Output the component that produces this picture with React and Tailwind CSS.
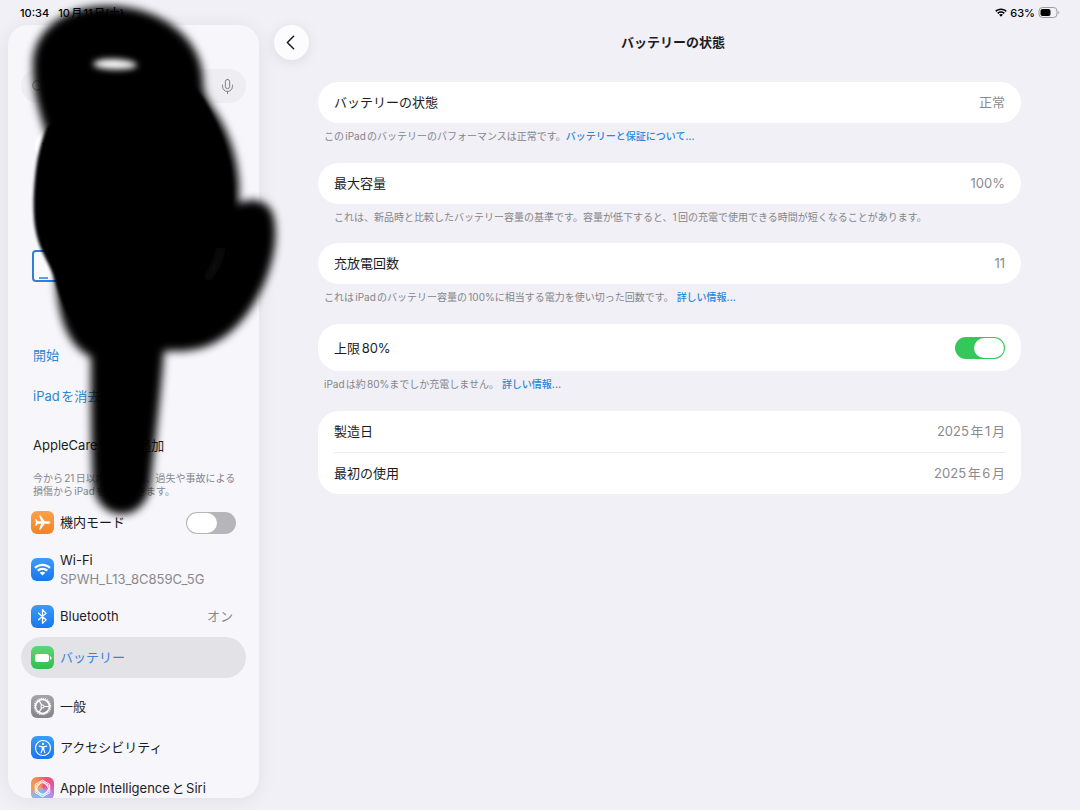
import { useState } from "react";
import { ChevronLeft, Mic, Search } from "lucide-react";

const WifiGlyph = ({ className }) => (
  <svg viewBox="0 0 24 18" className={className} fill="currentColor" aria-hidden="true">
    <path d="M12 .8C7.4.8 3.3 2.600.4 5.500l2.200 2.300C5 5.400 8.300 4 12 4s7 1.400 9.400 3.800l2.200-2.300C20.700 2.600 16.600.8 12 .8z" />
    <path d="M12 6.400c-3 0-5.800 1.200-7.800 3.100l2.300 2.300c1.400-1.400 3.400-2.200 5.500-2.200s4.100.8 5.500 2.200l2.300-2.300c-2-1.900-4.800-3.100-7.800-3.100z" />
    <path d="M12 12c-1.500 0-2.800.6-3.800 1.500L12 17.400l3.800-3.900c-1-.9-2.300-1.500-3.800-1.500z" />
  </svg>
);

const PlaneGlyph = () => (
  <svg viewBox="0 0 24 24" className="w-[17px] h-[17px]" fill="currentColor" aria-hidden="true">
    <path d="M23 12c0-1.200-1.600-1.900-3.400-1.900h-4.400L9.300 2.200H7.200l2.900 7.900H5.500L3.300 7.300H1.500L2.900 12l-1.400 4.700h1.800l2.200-2.800h4.600l-2.900 7.900h2.100l5.900-7.900h4.400c1.800 0 3.400-.7 3.400-1.900z" />
  </svg>
);

const BluetoothGlyph = () => (
  <svg viewBox="0 0 24 24" className="w-[17px] h-[17px]" fill="none" stroke="currentColor" strokeWidth="1.800" strokeLinejoin="round" strokeLinecap="round" aria-hidden="true">
    <path d="m6.500 7.300 10.500 9.400-5 5V2.300l5 5L6.500 16.700" />
  </svg>
);

const BatteryGlyph = () => (
  <svg viewBox="0 0 18 10" className="w-[18px] h-[10px]" fill="currentColor" aria-hidden="true">
    <rect x="1" y="1" width="14" height="8" rx="2.500" />
    <path d="M16 3.200c1 .3 1.500 1 1.500 1.800S17 6.500 16 6.800z" />
  </svg>
);

const GearGlyph = () => (
  <svg viewBox="0 0 24 24" className="w-[19px] h-[19px]" fill="none" stroke="currentColor" aria-hidden="true">
    <circle cx="12" cy="12" r="8.800" strokeWidth="2" />
    <circle cx="12" cy="12" r="10.300" strokeWidth="1.400" strokeDasharray="1.500 1.197" />
    <circle cx="12" cy="12" r="2" strokeWidth="1.300" />
    <path d="M14 12h6.500M11 10.300 7.700 4.700M11 13.700l-3.300 5.600" strokeWidth="1.500" />
  </svg>
);

const AccessibilityGlyph = () => (
  <svg viewBox="0 0 24 24" className="w-[18px] h-[18px]" fill="none" stroke="currentColor" strokeLinecap="round" strokeLinejoin="round" aria-hidden="true">
    <circle cx="12" cy="12" r="10" strokeWidth="1.500" />
    <circle cx="12" cy="6.600" r="1.500" fill="currentColor" stroke="none" />
    <path d="m7 9.500 3.500.8h3L17 9.500M11 10.500v3.500l-1.500 4.300M13 10.500v3.500l1.500 4.300M12 10.500v3.500" strokeWidth="1.500" />
  </svg>
);

const SiriGlyph = () => (
  <svg viewBox="0 0 24 24" className="w-[21px] h-[21px]" fill="none" stroke="currentColor" strokeWidth="1.100" strokeLinejoin="round" aria-hidden="true">
    <path d="M12 2.500 20.200 7.300v9.400L12 21.500 3.800 16.700V7.300z" />
    <path d="M12 4.500c4 0 4 3 6.500 3.700s0 4 0 7.500c-2.500.7-2.500 3.800-6.500 3.800s-4-3.100-6.500-3.800c0-3.500-2.500-6.800 0-7.500S8 4.500 12 4.500z" />
    <rect x="6" y="6" width="12" height="12" rx="5" transform="rotate(45 12 12)" />
  </svg>
);

const Toggle = ({ id, checked, onChange }) => (
  <input
    id={id}
    type="checkbox"
    role="switch"
    checked={checked}
    onChange={onChange}
    className="appearance-none shrink-0 w-[50px] h-[22px] p-px rounded-full bg-[#b5b5ba] checked:bg-[#34c759] before:block before:w-[30px] before:h-5 before:rounded-full before:bg-white checked:before:ml-auto cursor-pointer"
  />
);

const Tile = ({ color, children }) => (
  <span className={`flex items-center justify-center shrink-0 w-[23px] h-[23px] rounded-md text-white ${color}`}>{children}</span>
);

const NavItem = ({ icon, color, label, value, active }) => (
  <button
    className={`flex items-center gap-[6px] w-full h-[41px] pl-[10px] pr-[13px] rounded-full text-left ${active ? "bg-[#e2e2e7] text-[#3b82d6]" : ""}`}
  >
    <Tile color={color}>{icon}</Tile>
    <span className="flex-1 pb-[2px] whitespace-nowrap">{label}</span>
    {value && <span className="pb-[2px] text-[#8a8a8e]">{value}</span>}
  </button>
);

const Sidebar = () => {
  const [airplane, setAirplane] = useState(false);
  return (
    <aside className="flex flex-col shrink-0 w-[251px] ml-2 mb-3 px-[13px] rounded-[20px] bg-[#f6f6fb] shadow-[0_2px_20px_rgba(0,0,0,0.07)] overflow-hidden">
      <div className="shrink-0 flex items-center gap-2 h-[34px] mt-11 px-[10px] rounded-full bg-[#eeeef2] text-[#77777b]">
        <Search size={14} strokeWidth={1.5} />
        <input type="search" aria-label="検索" className="flex-1 min-w-0 bg-transparent outline-none" />
        <button aria-label="音声入力">
          <Mic size={17} strokeWidth={1.3} />
        </button>
      </div>

      <div className="shrink-0 flex items-center h-[86px] px-[14px]">
        <span className="w-9 h-9 rounded-full bg-white" />
      </div>
      <div className="shrink-0 flex items-center h-[153px] px-[11px]">
        <svg viewBox="0 0 44 32" className="w-11 h-8" fill="none" stroke="#2f80d8" aria-hidden="true">
          <rect x="1" y="1" width="42" height="30" rx="3" strokeWidth="2" fill="#fbfbff" />
          <path d="M7 28h9" strokeWidth="1.500" />
        </svg>
      </div>
      <button className="shrink-0 flex items-center h-[41px] px-3 -mt-2 text-[#2f86d0]">開始</button>
      <button className="shrink-0 flex items-center h-[41px] px-3 text-[#2f86d0]">iPadを消去</button>
      <button className="shrink-0 flex items-center h-[41px] px-3 mt-2">AppleCare保証を追加</button>
      <p className="shrink-0 pl-3 mt-[7px] mb-1 text-[10px] leading-[13px] text-[#85858a] whitespace-nowrap">
        今から21日以内であれば、過失や事故による
        <br />
        損傷からiPadを保護できます。
      </p>

      <nav className="shrink-0">
        <div className="flex items-center gap-[6px] h-[41px] px-[10px]">
          <Tile color="bg-linear-to-b from-[#fba14a] to-[#f58220]">
            <PlaneGlyph />
          </Tile>
          <label htmlFor="airplane" className="flex-1 pb-[2px]">機内モード</label>
          <Toggle id="airplane" checked={airplane} onChange={() => setAirplane(!airplane)} />
        </div>
        <button className="flex items-center gap-[6px] w-full h-[53px] px-[10px] text-left">
          <Tile color="bg-linear-to-b from-[#3d9bf8] to-[#1677ee]">
            <WifiGlyph className="w-[17px] h-[13px]" />
          </Tile>
          <span className="leading-[19px]">
            Wi-Fi
            <span className="block text-[#8a8a8e]">SPWH_L13_8C859C_5G</span>
          </span>
        </button>
        <NavItem icon={<BluetoothGlyph />} color="bg-linear-to-b from-[#3d9bf8] to-[#1677ee]" label="Bluetooth" value="オン" />
        <NavItem icon={<BatteryGlyph />} color="bg-linear-to-b from-[#5ed576] to-[#2fbf4c]" label="バッテリー" active />
        <div className="mt-2">
          <NavItem icon={<GearGlyph />} color="bg-linear-to-b from-[#a5a5a9] to-[#858589]" label="一般" />
          <NavItem icon={<AccessibilityGlyph />} color="bg-linear-to-b from-[#3d9bf8] to-[#1677ee]" label="アクセシビリティ" />
          <NavItem icon={<SiriGlyph />} color="bg-[conic-gradient(from_20deg,#e8567a,#e0569a,#b98be0,#7db8f2,#8fb4ee,#f5a04c,#f08a5a,#e8567a)]" label="Apple IntelligenceとSiri" />
        </div>
      </nav>
    </aside>
  );
};

const Card = ({ children }) => <div className="px-4 rounded-[21px] bg-white">{children}</div>;

const Row = ({ label, value }) => (
  <div className="flex items-center justify-between h-[41px] pb-[2px]">
    <span>{label}</span>
    <span className="text-[#8a8a8e]">{value}</span>
  </div>
);

const Note = ({ children, link, inset }) => (
  <p className={`pt-[6px] text-[10px] leading-[14px] text-[#85858a] ${inset ? "px-4 pb-[19px]" : "px-[6px] pb-5"}`}>
    {children}
    {link && <a href="#" className="font-medium text-[#2a86e0]">{link}</a>}
  </p>
);

const BatteryHealth = () => {
  const [limit, setLimit] = useState(true);
  return (
    <main className="flex-1 min-w-0">
      <header className="flex items-center h-[35px] ml-[15px] mr-[43px]">
        <button aria-label="戻る" className="flex items-center justify-center w-[35px] h-[35px] pr-[2px] rounded-full bg-[#fcfcfe] shadow-[0_2px_14px_rgba(0,0,0,0.09)]">
          <ChevronLeft size={25} strokeWidth={1.5} />
        </button>
        <h1 className="flex-1 pb-[2px] text-center font-semibold">バッテリーの状態</h1>
      </header>

      <div className="mt-[22px] mx-[59px]">
        <Card>
          <Row label="バッテリーの状態" value="正常" />
        </Card>
        <Note link="バッテリーと保証について...">このiPadのバッテリーのパフォーマンスは正常です。</Note>
        <Card>
          <Row label="最大容量" value="100%" />
        </Card>
        <Note inset>これは、新品時と比較したバッテリー容量の基準です。容量が低下すると、1回の充電で使用できる時間が短くなることがあります。</Note>
        <Card>
          <Row label="充放電回数" value="11" />
        </Card>
        <Note link="詳しい情報...">これはiPadのバッテリー容量の100%に相当する電力を使い切った回数です。 </Note>
        <Card>
          <div className="flex items-center justify-between h-[47px]">
            <label htmlFor="limit">上限80%</label>
            <Toggle id="limit" checked={limit} onChange={() => setLimit(!limit)} />
          </div>
        </Card>
        <Note link="詳しい情報...">iPadは約80%までしか充電しません。 </Note>
        <Card>
          <Row label="製造日" value="2025年1月" />
          <div className="h-px bg-[#ececf0]" />
          <Row label="最初の使用" value="2025年6月" />
        </Card>
      </div>
    </main>
  );
};

// Black marker scribbled over the personal details
const Redaction = () => (
  <svg viewBox="0 0 300 540" className="absolute top-0 left-0 w-[300px] h-[540px] pointer-events-none" aria-hidden="true">
    <defs>
      <filter id="soft" x="-20%" y="-20%" width="140%" height="140%">
        <feGaussianBlur stdDeviation="4" />
      </filter>
      <filter id="edge" x="-20%" y="-20%" width="140%" height="140%">
        <feGaussianBlur stdDeviation="1.500" />
      </filter>
      <filter id="spot" x="-50%" y="-100%" width="200%" height="300%">
        <feGaussianBlur stdDeviation="3" />
      </filter>
    </defs>
    <g filter="url(#soft)">
      <path d="M33 64C33 34 60 6 108 6c52 0 95 32 95 75 0 12 3 17 9 26 16 22 26 50 27 80l-1 36-90 40-100-124C40 114 33 94 33 64z" />
      <path d="M234 208c8-10 30-12 38 4 8 22 1 56-14 84-16 30-40 55-80 55h-14c-4 50-9 90-13 130-2 22-15 33-29 33-16 0-28-13-29-33-2-40-2-80-2-124-22-11-33-36-35-80z" />
    </g>
    <path filter="url(#edge)" d="M46 130c20-28 70-60 126-54 24 3 36 28 44 46 12 25 17 50 17 76-3 36-21 74-47 106-24 30-90 40-118 10-8-14-10-24-14-36-4-14-14-26-18-46-3-14-3-34-1-54 2-20 5-33 11-48z" />
    <path filter="url(#spot)" d="M93 64c6-7 38-5 44 1-2 5-38 6-44-1z" fill="#fff" stroke="#fff" strokeWidth="1" />
    <path filter="url(#spot)" d="M221 248c-2 12-7 22-14 31" fill="none" stroke="#222" strokeWidth="3" />
    <path d="m47 128 4 3-3 3 4 3-6 1 3 4-7 1 3 5-4 3 5 3-2 5 12-2V126z" />
  </svg>
);

export default function App() {
  return (
    <div
      lang="ja"
      className="relative flex flex-col h-screen overflow-hidden bg-[#f0f0f6] text-[#1c1c1e] text-[13px] leading-4 font-['Inter','Noto_Sans_CJK_JP',sans-serif] [text-autospace:normal]"
    >
      <div className="shrink-0 flex items-center justify-between h-[25px] px-5 text-[11px] font-medium text-black">
        <div className="flex gap-[9px]">
          <span>10:34</span>
          <span>10月11日(土)</span>
        </div>
        <div className="flex items-center gap-[3px]">
          <WifiGlyph className="w-3 h-[9px]" />
          <span>63%</span>
          <svg viewBox="0 0 22 11" className="w-[22px] h-[11px]" aria-label="バッテリー残量">
            <rect x="1" y=".5" width="18" height="10" rx="3.500" fill="none" stroke="#9c9ca1" />
            <rect x="2.500" y="2" width="10" height="7" rx="2" />
            <path d="M20.300 3.800c1.300.6 1.300 2.800 0 3.400z" fill="#9c9ca1" />
          </svg>
        </div>
      </div>
      <div className="flex flex-1 min-h-0">
        <Sidebar />
        <BatteryHealth />
      </div>
      <Redaction />
    </div>
  );
}
